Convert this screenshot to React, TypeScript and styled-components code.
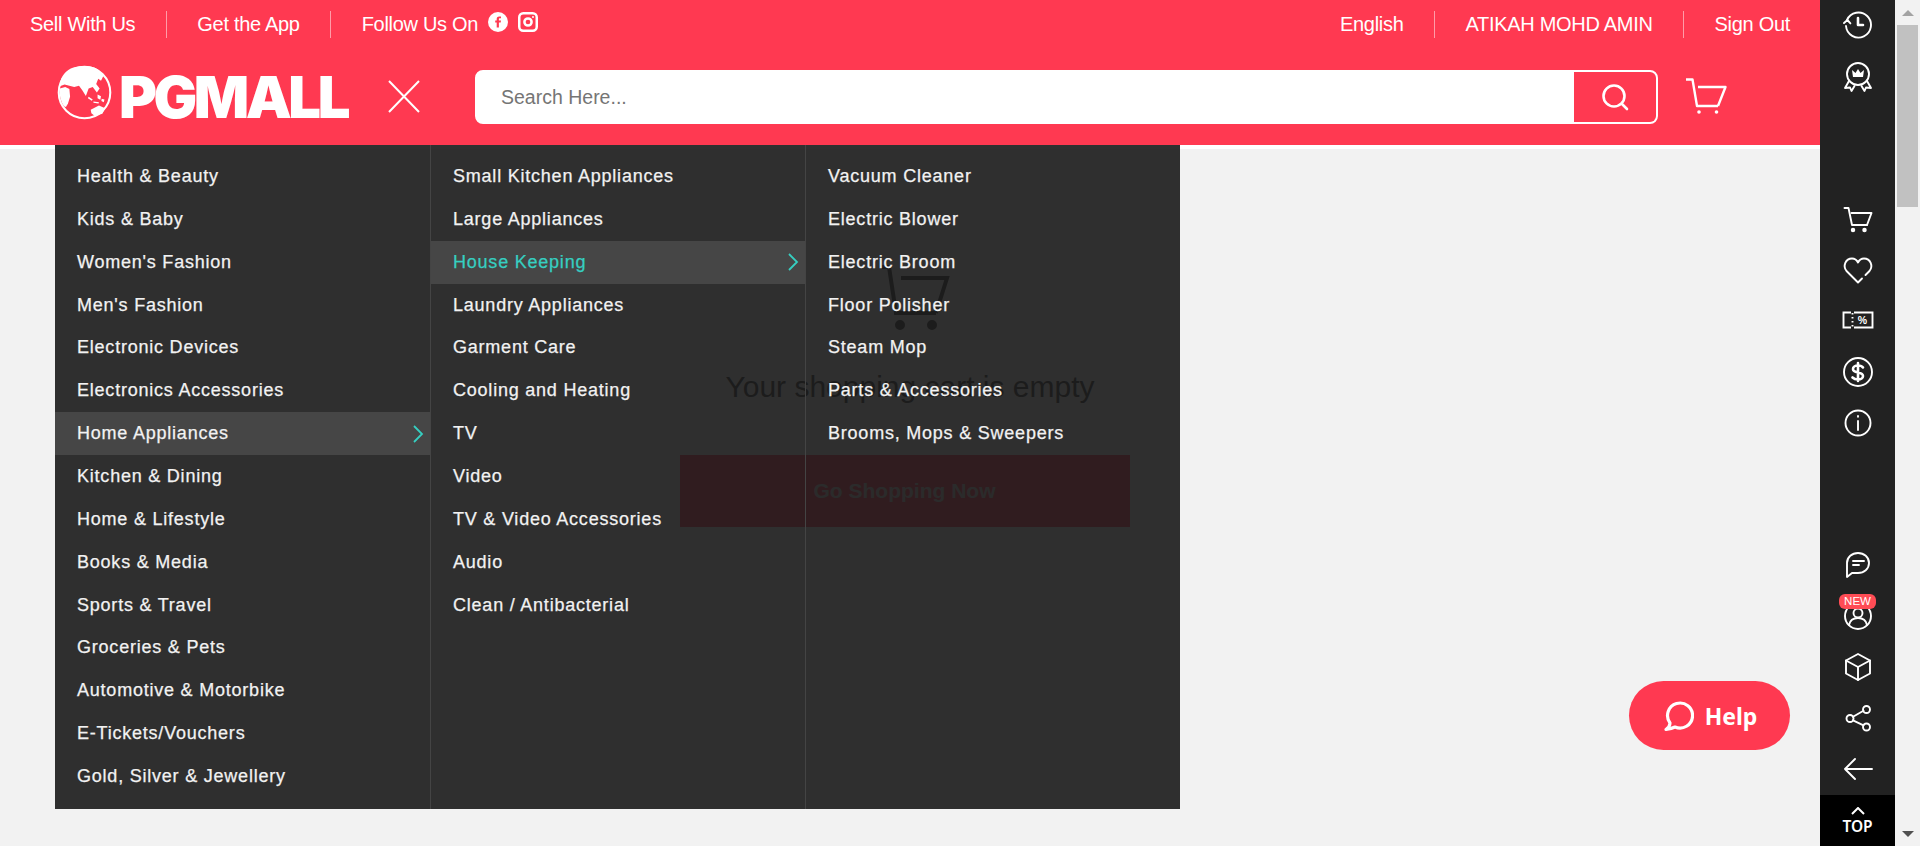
import React from "react";
import styled, { createGlobalStyle } from "styled-components";

const red = "#ff3951";
const col1 = ["Health & Beauty","Kids & Baby","Women's Fashion","Men's Fashion","Electronic Devices","Electronics Accessories","Home Appliances","Kitchen & Dining","Home & Lifestyle","Books & Media","Sports & Travel","Groceries & Pets","Automotive & Motorbike","E-Tickets/Vouchers","Gold, Silver & Jewellery"];
const col2 = ["Small Kitchen Appliances","Large Appliances","House Keeping","Laundry Appliances","Garment Care","Cooling and Heating","TV","Video","TV & Video Accessories","Audio","Clean / Antibacterial"];
const col3 = ["Vacuum Cleaner","Electric Blower","Electric Broom","Floor Polisher","Steam Mop","Parts & Accessories","Brooms, Mops & Sweepers"];

const Global = createGlobalStyle`
  html, body { margin: 0; height: 100%; overflow: hidden; background: #f2f2f2; }
  body { font-family: "Liberation Sans", Arial, sans-serif; }
  #root { height: 100%; }
`;
const Page = styled.div`
  display: flex;
  height: 846px;
  position: relative;
`;
const Main = styled.div`
  flex: 1;
  min-width: 0;
  position: relative;
`;
const Header = styled.header`
  background: ${red};
  height: 145px;
  border-bottom: 4px solid #fff;
  color: #fff;
`;
const TopBar = styled.div`
  display: flex;
  justify-content: space-between;
  padding: 11px 30px 0;
  height: 27px;
`;
const TopGroup = styled.div`
  display: flex;
  align-items: stretch;
`;
const TopLink = styled.span`
  font-size: 20px;
  letter-spacing: -0.3px;
  line-height: 26px;
  padding: 0 30.5px;
  border-left: 1px solid rgba(255,255,255,.5);
  display: flex;
  align-items: flex-start;
  gap: 10px;
  &:first-child { padding-left: 0; border-left: 0; }
  &:last-child { padding-right: 0; }
`;
const SocialIcon = styled.svg`
  margin-top: 1px;
`;
const SearchRow = styled.div`
  display: flex;
  align-items: center;
  padding: 27px 0 0 57px;
`;
const Logo = styled.div`
  display: flex;
  align-items: center;
  width: 294px;
  gap: 7px;
`;
const GlobeMark = styled.svg`
  margin-bottom: 8px;
  flex: none;
`;
const LogoText = styled.span`
  font-family: Inter, "Liberation Sans", sans-serif;
  font-weight: 900;
  font-size: 58px;
  line-height: 54px;
  letter-spacing: -3.5px;
`;
const CloseBtn = styled.svg`
  margin-left: 37px;
  flex: none;
`;
const SearchBox = styled.div`
  margin-left: 55px;
  width: 1183px;
  height: 54px;
  background: #fff;
  border: 2px solid #fff;
  border-radius: 8px;
  box-sizing: border-box;
  display: flex;
  overflow: hidden;
`;
const SearchInput = styled.div`
  flex: 1;
  color: #757575;
  font-size: 19.5px;
  line-height: 50px;
  padding-left: 24px;
`;
const SearchBtn = styled.div`
  width: 82px;
  background: ${red};
  display: flex;
  align-items: center;
  justify-content: center;
`;
const CartLink = styled.div`
  margin-left: 27px;
  display: flex;
`;
const Empty = styled.section`
  display: flex;
  flex-direction: column;
  align-items: center;
  padding-top: 115px;
  margin-left: -5px;
`;
const EmptyCart = styled.svg`
  margin-left: 14px;
`;
const EmptyText = styled.div`
  font-size: 30px;
  line-height: 40px;
  color: #333;
  margin-top: 35px;
  margin-left: 5px;
`;
const ShopBtn = styled.div`
  width: 450px;
  height: 72px;
  margin-top: 48px;
  margin-right: 6px;
  background: ${red};
  color: #ccc;
  font-size: 21px;
  font-weight: 700;
  display: flex;
  align-items: center;
  justify-content: center;
`;
const Menu = styled.nav`
  position: absolute;
  left: 55px;
  top: 145px;
  height: 664px;
  display: flex;
  background: rgba(25,25,25,.9);
`;
const Column = styled.ul`
  list-style: none;
  margin: 0;
  padding: 10px 0 0;
  width: 375px;
  box-sizing: border-box;
  & + & { border-left: 1px solid #444; }
`;
const Item = styled.li<{ $active?: boolean }>`
  height: 42.87px;
  display: flex;
  align-items: center;
  justify-content: space-between;
  padding: 0 6px 0 22px;
  font-size: 18px;
  letter-spacing: .78px;
  -webkit-text-stroke: .25px #f2f2f2;
  color: #f2f2f2;
  background: ${(p) => (p.$active ? "#464646" : "transparent")};
`;
const ItemLabel = styled.span<{ $accent?: boolean }>`
  color: ${(p) => (p.$accent ? "#36cfc1" : "inherit")};
  -webkit-text-stroke-color: ${(p) => (p.$accent ? "#36cfc1" : "inherit")};
`;
const Rail = styled.aside`
  width: 75px;
  background: #222;
  display: flex;
  flex-direction: column;
  align-items: center;
  color: #fff;
`;
const RailGroup = styled.div<{ $top: number; $gap: number }>`
  display: flex;
  flex-direction: column;
  align-items: center;
  margin-top: ${(p) => p.$top}px;
  gap: ${(p) => p.$gap}px;
`;
const RailIcon = styled.div`
  position: relative;
  width: 37px;
  height: 32px;
  display: flex;
  align-items: center;
  justify-content: center;
`;
const NewBadge = styled.span`
  position: absolute;
  left: 0;
  top: -6px;
  width: 37px;
  height: 15px;
  border-radius: 6px;
  background: #ff4c55;
  color: #fff;
  font-size: 11.5px;
  line-height: 15px;
  text-align: center;
`;
const TopBtn = styled.div`
  margin-top: auto;
  width: 100%;
  height: 51px;
  background: #000;
  display: flex;
  flex-direction: column;
  align-items: center;
  font-family: "Noto Sans", sans-serif;
  font-size: 15.5px;
  font-weight: 600;
  line-height: 15px;
  padding-top: 12px;
  box-sizing: border-box;
  gap: 4px;
`;
const Scrollbar = styled.div`
  width: 25px;
  background: #f2f2f2;
  position: relative;
  display: flex;
  flex-direction: column;
  align-items: center;
`;
const Thumb = styled.div`
  width: 21px;
  height: 182px;
  margin-top: 25px;
  background: #c1c1c1;
`;
const Arrow = styled.div<{ $down?: boolean }>`
  position: absolute;
  ${(p) => (p.$down ? "bottom: 9px;" : "top: 10px;")}
  width: 0;
  height: 0;
  border-left: 6px solid transparent;
  border-right: 6px solid transparent;
  ${(p) => (p.$down ? "border-top: 6px solid #505050;" : "border-bottom: 6px solid #a3a3a3;")}
`;
const Help = styled.div`
  position: absolute;
  left: 1629px;
  top: 681px;
  width: 161px;
  height: 69px;
  border-radius: 35px;
  background: ${red};
  color: #fff;
  display: flex;
  align-items: center;
  justify-content: center;
  gap: 11px;
  font-family: "Noto Sans", sans-serif;
  font-weight: 700;
  font-size: 23px;
`;

const Ico = ({ size = 32, w = 1.9, children, vb = 32 }: { size?: number; w?: number; vb?: number; children: React.ReactNode }) => (
  <svg width={size} height={size} viewBox={`0 0 ${vb} ${vb}`} fill="none" stroke="currentColor" strokeWidth={w} strokeLinecap="round" strokeLinejoin="round">{children}</svg>
);
const Globe = () => (
  <GlobeMark width="55" height="55" viewBox="0 0 160 160">
    <circle cx="80" cy="80" r="75" fill="none" stroke="#fff" strokeWidth="6" />
    <path fill="#fff" d="M40 10C60 0 100 0 118 12L136 30L128 46L120 40L114 55L124 68L116 80L104 64L92 68L84 90L74 74L64 60L50 64L36 60L22 57L8 62C8 40 20 20 40 10Z" />
    <path fill="#fff" d="M8 68L24 64L36 70L38 92L32 112L26 122L20 120C10 105 6 85 8 68Z" />
    <path fill="#fff" d="M98 130L122 118L140 126L132 142L110 148L100 140Z" />
    <path fill="#fff" d="M92 92l12 8-3 4-11-7zM106 106l16 2-1 4-15-2zM118 86l10 5-2 10-8-4zM130 98l8 2-2 8-7-3z" />
  </GlobeMark>
);
const HeaderCart = () => (
  <svg width="42" height="37" viewBox="0 0 42 37" fill="none" stroke="currentColor" strokeWidth="2.400" strokeLinejoin="round">
    <path d="M1 1.500H7.500L12 28H33" />
    <path d="M13 9H40.500L33 28" />
    <circle cx="14" cy="34" r="1.800" fill="currentColor" stroke="none" />
    <circle cx="31.500" cy="34" r="1.800" fill="currentColor" stroke="none" />
  </svg>
);
const Chevron = () => (
  <svg width="12" height="18" viewBox="0 0 12 18" fill="none" stroke="#36cfc1" strokeWidth="1.800"><path d="M2 1l8 8-8 8" /></svg>
);

const rail1 = [
  <Ico key="h"><path d="M5 12A12.500 12.500 0 1 1 4 18" /><path d="M2 15l3.400-3 3 3.400" /><path d="M16 10v7h5" strokeWidth="2.600" /></Ico>,
  <Ico key="r"><circle cx="16" cy="13" r="11" /><path d="M11 16l-1-7 3.500 3L16 8l2.500 4L22 9l-1 7z" fill="currentColor" stroke="none" /><path d="M7 20l-4 7 5-.5 1.500 3.500 3-5M25 20l4 7-5-.5-1.500 3.500-3-5" /></Ico>,
];
const rail2 = [
  <Ico key="c"><path d="M2.500 5h4L10 22h15" /><path d="M9.500 10h20L25 22" /><circle cx="11" cy="27" r="1.300" fill="currentColor" /><circle cx="22.500" cy="27" r="1.300" fill="currentColor" /></Ico>,
  <Ico key="l"><path d="M16 28.500L4.500 17C.5 12 3.500 4.500 10 4.500c3 0 5 2 6 4 1-2 3-4 6-4 6.500 0 9.500 7.500 5.500 12.500l-4 4M20 24.500l-4 4" /></Ico>,
  <Ico key="v"><path d="M9 7.500H1.500V22.500H9M12 7.500H30.500V22.500H12" strokeLinecap="butt" strokeLinejoin="miter" /><path d="M10.500 8v14" strokeDasharray="1.500 2.500" strokeLinecap="butt" /><text x="20.500" y="19" fontSize="10.500" fontWeight="700" textAnchor="middle" fill="currentColor" stroke="none" fontFamily="Liberation Sans">%</text></Ico>,
  <Ico key="d"><circle cx="16" cy="16" r="14" /><path d="M21 11.500c-1-1.500-3-2-5-2-3 0-5 1.500-5 3.500 0 5 10 2 10 7 0 2-2 3.500-5 3.500-2.500 0-4-.5-5.500-2M16 7v18" strokeWidth="2.600" /></Ico>,
  <Ico key="i"><circle cx="16" cy="16" r="12.500" /><path d="M16 14v9M16 9v.8" /></Ico>,
];
const rail3 = [
  <Ico key="m"><path d="M5 28V14C5 8 10 4 16 4c6 0 11 4 11 10s-5 10-11 10h-6z" /><path d="M11 12h11M11 16h6" /></Ico>,
  <RailIcon key="u"><NewBadge>NEW</NewBadge><Ico><circle cx="16" cy="16" r="13" /><circle cx="16" cy="13" r="4.500" /><path d="M7 25c1-5 5-7 9-7s8 2 9 7" /></Ico></RailIcon>,
  <Ico key="b"><path d="M16 3l12 6.500v13L16 29 4 22.500v-13z" /><path d="M4 9.500L16 16l12-6.500M16 16v13" /></Ico>,
  <Ico key="s"><circle cx="24.500" cy="7.500" r="3.500" /><circle cx="8" cy="16.500" r="3.500" /><circle cx="24.500" cy="25" r="3.500" /><path d="M11 14.800l10.500-6M11 18.300l10.500 5" /></Ico>,
  <Ico key="a"><path d="M30 16H3M13 6L3 16l10 10" /></Ico>,
];

export default function App() {
  return (
    <Page>
      <Global />
      <Main>
        <Header>
          <TopBar>
            <TopGroup>
              <TopLink>Sell With Us</TopLink>
              <TopLink>Get the App</TopLink>
              <TopLink>
                Follow Us On
                <SocialIcon width="20" height="20" viewBox="0 0 20 20"><circle cx="10" cy="10" r="10" fill="#fff" /><path d="M10.900 15.500V10.600h1.800l.3-2.100h-2.100V7.300c0-.6.2-1 1-1h1.100V4.500h-1.600C9.300 4.500 8.700 5.600 8.700 7v1.500H7.200v2.100h1.500v4.900z" fill={red} /></SocialIcon>
                <SocialIcon width="20" height="20" viewBox="0 0 20 20" fill="none" stroke="#fff" strokeWidth="2.500"><rect x="1.250" y="1.250" width="17.500" height="17.500" rx="4" /><circle cx="10" cy="10" r="3.600" /><circle cx="15" cy="5" r=".6" fill="#fff" strokeWidth="1" /></SocialIcon>
              </TopLink>
            </TopGroup>
            <TopGroup>
              <TopLink>English</TopLink>
              <TopLink>ATIKAH MOHD AMIN</TopLink>
              <TopLink>Sign Out</TopLink>
            </TopGroup>
          </TopBar>
          <SearchRow>
            <Logo>
              <Globe />
              <LogoText>PGMALL</LogoText>
            </Logo>
            <CloseBtn width="32" height="33" viewBox="0 0 32 33" stroke="#fff" strokeWidth="2"><path d="M1 1l30 31M31 1L1 32" /></CloseBtn>
            <SearchBox>
              <SearchInput>Search Here...</SearchInput>
              <SearchBtn>
                <svg width="30" height="30" viewBox="0 0 30 30" fill="none" stroke="#fff" strokeWidth="2.600" strokeLinecap="round"><circle cx="14" cy="14" r="10.500" /><path d="M22 22l5 5" /></svg>
              </SearchBtn>
            </SearchBox>
            <CartLink><HeaderCart /></CartLink>
          </SearchRow>
        </Header>
        <Empty>
          <EmptyCart width="76" height="68" viewBox="0 0 76 68" fill="none" stroke="#333" strokeWidth="4"><path d="M3 3h9l7 46h40" /><path d="M24 14h46l-11 35" /><circle cx="23" cy="61" r="3" fill="#333" /><circle cx="55" cy="61" r="3" fill="#333" /></EmptyCart>
          <EmptyText>Your shopping cart is empty</EmptyText>
          <ShopBtn>Go Shopping Now</ShopBtn>
        </Empty>
        <Menu>
          <Column>
            {col1.map((t) => (
              <Item key={t} $active={t === "Home Appliances"}>
                <ItemLabel>{t}</ItemLabel>
                {t === "Home Appliances" && <Chevron />}
              </Item>
            ))}
          </Column>
          <Column>
            {col2.map((t) => (
              <Item key={t} $active={t === "House Keeping"}>
                <ItemLabel $accent={t === "House Keeping"}>{t}</ItemLabel>
                {t === "House Keeping" && <Chevron />}
              </Item>
            ))}
          </Column>
          <Column>
            {col3.map((t) => (
              <Item key={t}><ItemLabel>{t}</ItemLabel></Item>
            ))}
          </Column>
        </Menu>
      </Main>
      <Rail>
        <RailGroup $top={8} $gap={21}>{rail1}</RailGroup>
        <RailGroup $top={110} $gap={19}>{rail2}</RailGroup>
        <RailGroup $top={110} $gap={19}>{rail3}</RailGroup>
        <TopBtn>
          <svg width="14" height="8" viewBox="0 0 14 8" fill="none" stroke="#fff" strokeWidth="2"><path d="M1 7l6-6 6 6" /></svg>
          TOP
        </TopBtn>
      </Rail>
      <Scrollbar>
        <Arrow />
        <Thumb />
        <Arrow $down />
      </Scrollbar>
      <Help>
        <svg width="32" height="32" viewBox="0 0 32 32" fill="none" stroke="#fff" strokeWidth="3.200" strokeLinecap="round" strokeLinejoin="round"><path d="M8 23A12.500 12.500 0 1 1 13 27C10 28.500 7 29 4 29.500C6 28 8 26 8 23Z" /></svg>
        Help
      </Help>
    </Page>
  );
}
